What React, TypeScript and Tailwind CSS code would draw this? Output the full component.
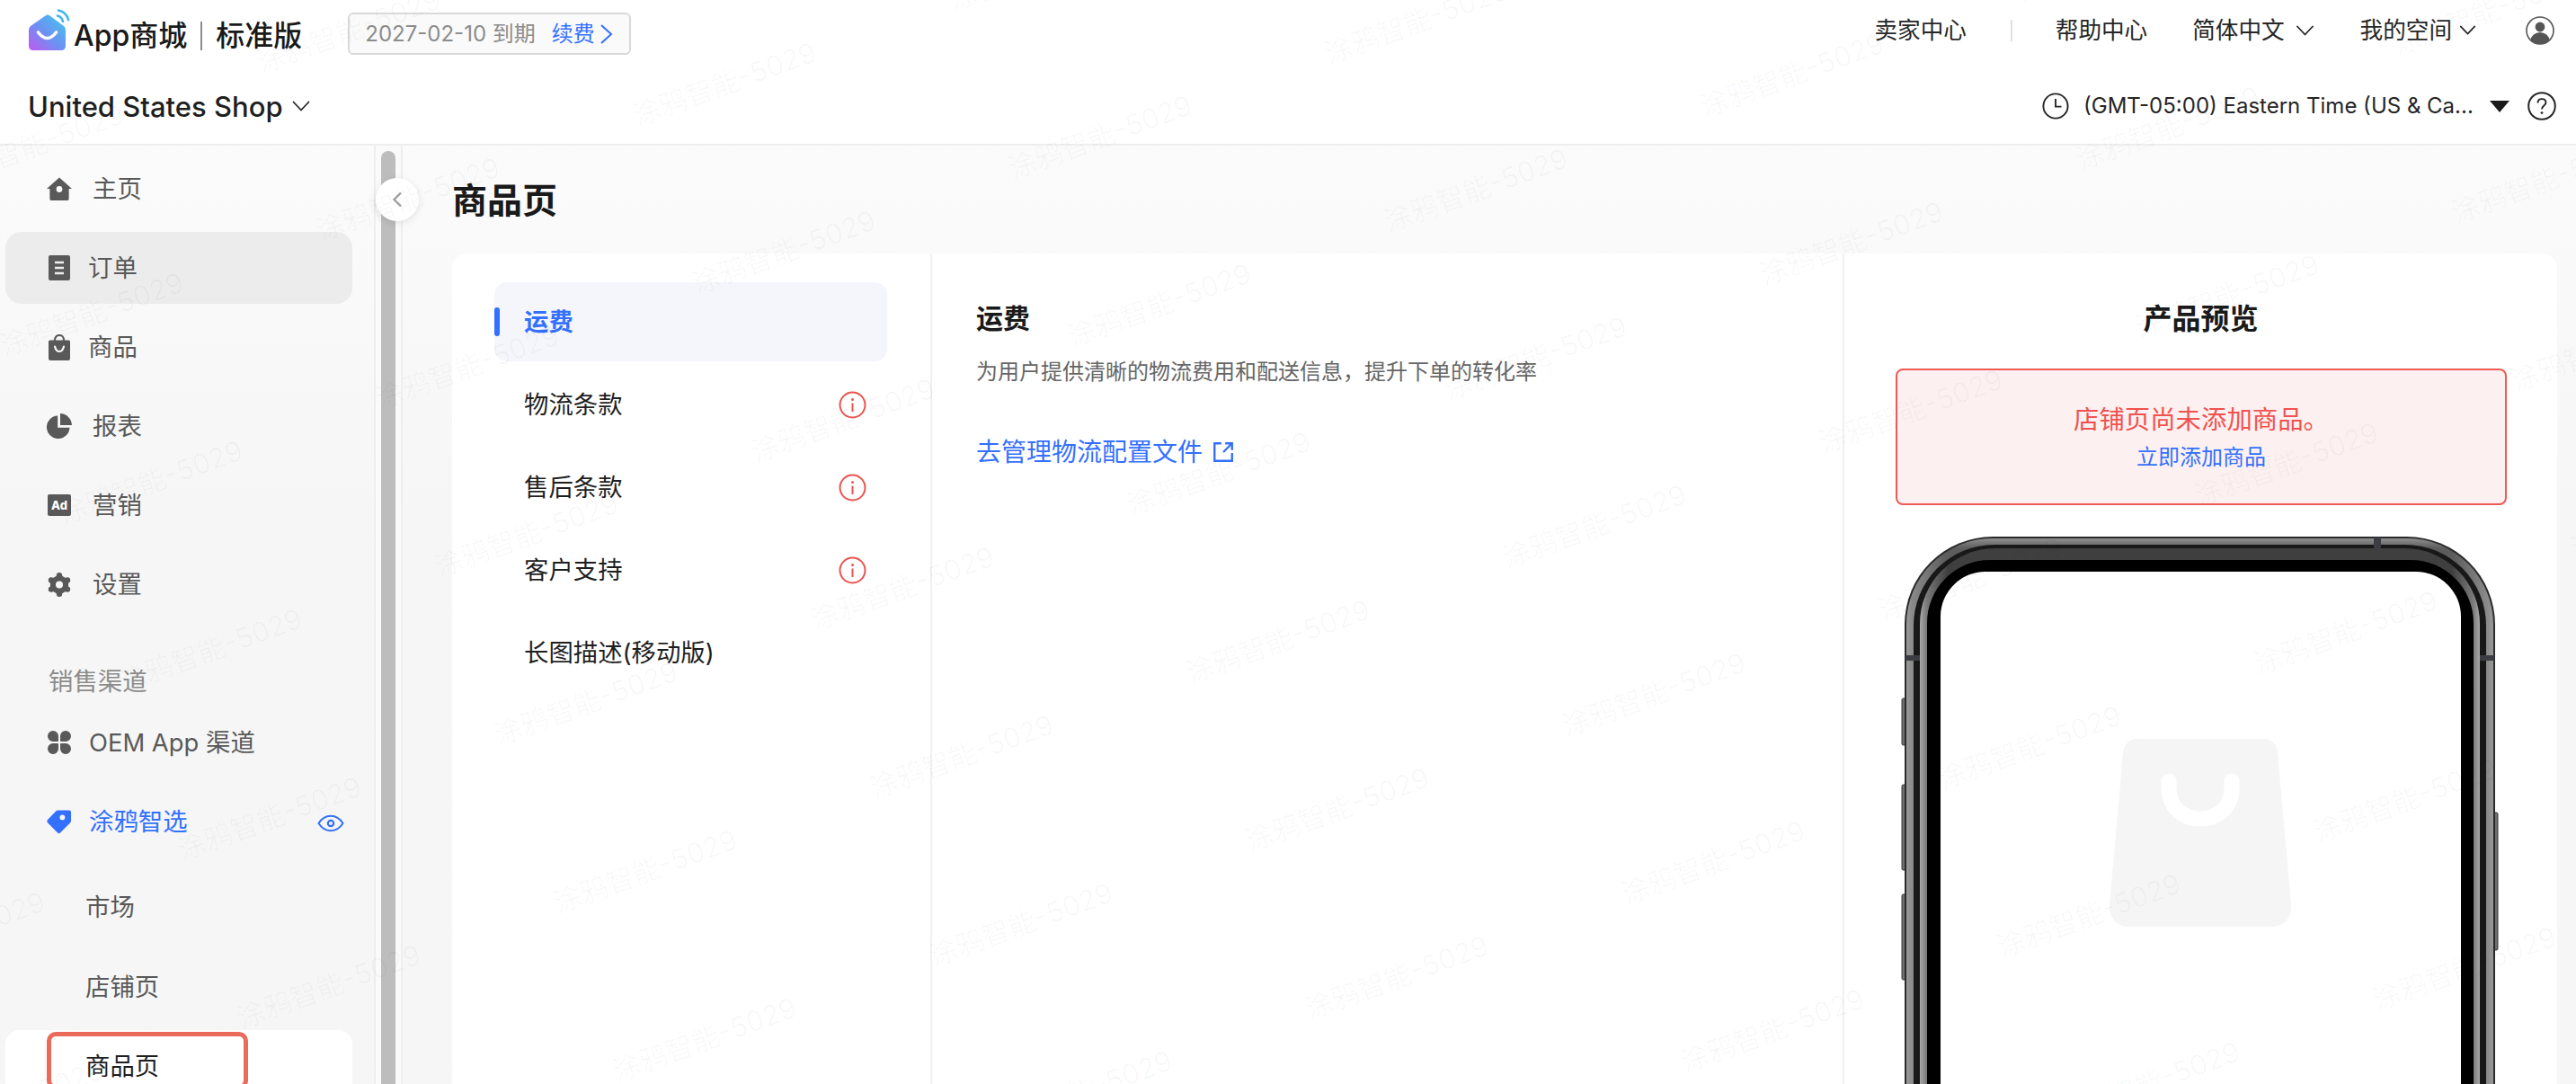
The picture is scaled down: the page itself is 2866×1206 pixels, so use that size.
import type { ReactNode } from "react";

// Rotated watermark lattice measured from the screenshot
const WATERMARKS: { x: number; y: number }[] = [];
for (let m = -5; m <= 8; m++) {
  for (let n = -2; n <= 10; n++) {
    const x = 67 + m * 66 + n * 352;
    const y = 573 + m * 187 - n * 128;
    if (x > -260 && x < 2900 && y > -40 && y < 1300) WATERMARKS.push({ x, y });
  }
}

function Chevron({ className }: { className: string }) {
  return (
    <svg viewBox="0 0 20 12" fill="none" className={className}>
      <path d="M1.5 1.5 10 10.5l8.5-9" stroke="currentColor" strokeWidth="1.8" strokeLinecap="round" strokeLinejoin="round" />
    </svg>
  );
}

function Logo() {
  return (
    <svg width="46" height="47" viewBox="0 0 46 47" fill="none" className="shrink-0">
      <defs>
        <linearGradient id="logoFill" x1="38" y1="8" x2="3" y2="46" gradientUnits="userSpaceOnUse">
          <stop offset="0" stopColor="#44c3ef" />
          <stop offset="0.55" stopColor="#6f8ff2" />
          <stop offset="1" stopColor="#bb5cf0" />
        </linearGradient>
      </defs>
      <path d="M18.5 7.5Q21 5.5 23.5 7.5L39 19Q41 20.5 41 23.5V41Q41 46 36 46H5Q0 46 0 41V23.5Q0 20.5 2 19Z" fill="url(#logoFill)" />
      <path d="M10.5 26Q20.5 39 30.5 26" stroke="#fff" strokeWidth="3.6" strokeLinecap="round" />
      <path d="M32 7.5Q37 9 38 14" stroke="#43b5ee" strokeWidth="2.6" strokeLinecap="round" />
      <path d="M33 1.5Q42 3.5 44 12" stroke="#43b5ee" strokeWidth="2.6" strokeLinecap="round" />
    </svg>
  );
}

function Avatar() {
  return (
    <svg width="32" height="32" viewBox="0 0 32 32" fill="none">
      <defs>
        <clipPath id="avatarClip">
          <circle cx="16" cy="16" r="15" />
        </clipPath>
      </defs>
      <circle cx="16" cy="16" r="15" stroke="#555" strokeWidth="1.6" />
      <g clipPath="url(#avatarClip)" fill="#555">
        <circle cx="16" cy="12" r="5.4" />
        <ellipse cx="16" cy="27" rx="10.5" ry="9" />
      </g>
    </svg>
  );
}

function ClockIcon() {
  return (
    <svg width="30" height="30" viewBox="0 0 30 30" fill="none">
      <circle cx="15" cy="15" r="13.6" stroke="#262626" strokeWidth="1.9" />
      <path d="M15 7v8.6h6.5" stroke="#262626" strokeWidth="1.9" />
    </svg>
  );
}

function HelpIcon() {
  return (
    <svg width="32" height="32" viewBox="0 0 32 32" fill="none">
      <circle cx="16" cy="16" r="14.8" stroke="#262626" strokeWidth="2" />
      <path d="M11.5 12.5c0-2.8 2-4.4 4.6-4.4s4.4 1.6 4.4 3.9c0 3.6-4.5 3.6-4.5 7.6" stroke="#262626" strokeWidth="1.9" />
      <circle cx="16" cy="23.6" r="1.4" fill="#262626" />
    </svg>
  );
}

function InfoIcon() {
  return (
    <svg width="31" height="31" viewBox="0 0 31 31" fill="none">
      <circle cx="15.5" cy="15.5" r="14" stroke="#ea5450" strokeWidth="2" />
      <circle cx="15.5" cy="9.5" r="1.5" fill="#ea5450" />
      <path d="M15.5 13.5v9.5" stroke="#ea5450" strokeWidth="2" />
    </svg>
  );
}

const HomeIcon = (
  <svg width="29" height="27" viewBox="0 0 29 27">
    <path fillRule="evenodd" d="M14.5 0 29 13h-3.5v12a1.5 1.5 0 0 1-1.5 1.5H5A1.5 1.5 0 0 1 3.5 25V13H0ZM14.5 10a3.5 3.5 0 1 0 0 7 3.5 3.5 0 0 0 0-7Z" fill="#595959" />
  </svg>
);

const OrderIcon = (
  <svg width="24" height="28" viewBox="0 0 24 28">
    <rect width="24" height="28" rx="2" fill="#595959" />
    <path d="M7 8h10M7 14h10M7 20h10" stroke="#f0f0f0" strokeWidth="2.6" />
  </svg>
);

const BagIcon = (
  <svg width="24" height="29" viewBox="0 0 24 29" fill="none">
    <path d="M7 8V6a5 5 0 0 1 10 0v2" stroke="#595959" strokeWidth="2.2" />
    <path d="M1.5 6.5h21A1.5 1.5 0 0 1 24 8v19a2 2 0 0 1-2 2H2a2 2 0 0 1-2-2V8a1.5 1.5 0 0 1 1.5-1.5Z" fill="#595959" />
    <path d="M7 13.5c1 4 3 5.5 5 5.5s4-1.5 5-5.5" stroke="#f6f6f6" strokeWidth="2.2" strokeLinecap="round" />
  </svg>
);

const PieIcon = (
  <svg width="28" height="28" viewBox="0 0 28 28">
    <path d="M12.2 2.5V15.8H25.5A12.8 12.8 0 1 1 12.2 2.5Z" fill="#595959" />
    <path d="M15 0.1A13.3 13.3 0 0 1 28 13H15Z" fill="#595959" />
  </svg>
);

const GearIcon = (
  <svg width="26" height="27" viewBox="0 0 26 27" fill="#595959">
    <path d="M13 3 22.1 8.25V18.75L13 24 3.9 18.75V8.25Z" stroke="#595959" strokeWidth="2" strokeLinejoin="round" />
    <circle cx="13" cy="3.3" r="3.2" />
    <circle cx="22" cy="8.4" r="3.2" />
    <circle cx="22" cy="18.6" r="3.2" />
    <circle cx="13" cy="23.7" r="3.2" />
    <circle cx="4" cy="18.6" r="3.2" />
    <circle cx="4" cy="8.4" r="3.2" />
    <circle cx="13" cy="13.5" r="4" fill="#f7f7f7" />
  </svg>
);

const AdIcon = (
  <div className="w-[26px] h-[24px] rounded-[2px] bg-[#595959] flex items-center justify-center text-white text-[13px] leading-none font-extrabold">
    Ad
  </div>
);

const ChannelIcon = (
  <svg width="26" height="26" viewBox="0 0 26 26" fill="#595959">
    <path d="M6 0a6 6 0 0 1 6 6v5a1 1 0 0 1-1 1H6A6 6 0 0 1 6 0ZM20 0a6 6 0 0 1 0 12h-5a1 1 0 0 1-1-1V6a6 6 0 0 1 6-6ZM6 14h5a1 1 0 0 1 1 1v5a6 6 0 1 1-6-6ZM15 14h5a6 6 0 1 1-6 6v-5a1 1 0 0 1 1-1Z" />
  </svg>
);

const TagIcon = (
  <svg width="29" height="29" viewBox="0 0 29 29">
    <path fillRule="evenodd" d="M1 12 10.5 2.2Q11.5 1 13 1H26Q28 1 28 3V13Q28 14.5 27 15.5L15.5 27Q14 28.4 12.5 27L1 15.2Q-.4 13.5 1 12ZM18 6.2a3 3 0 1 0 0 6 3 3 0 0 0 0-6Z" fill="#3370ff" />
  </svg>
);

function EyeIcon() {
  return (
    <svg width="30" height="20" viewBox="0 0 30 20" fill="none" className="ml-auto mr-[9px] mt-[4px]">
      <path d="M1.5 10C5 4.5 9.5 1.8 15 1.8S25 4.5 28.5 10C25 15.5 20.5 18.2 15 18.2S5 15.5 1.5 10Z" stroke="#3370ff" strokeWidth="2" />
      <circle cx="15" cy="10" r="3.2" stroke="#3370ff" strokeWidth="2.2" />
    </svg>
  );
}

function NavItem({
  icon,
  label,
  textClass = "ml-[23px]",
  active = false,
  color = "text-[#595959]",
  children,
}: {
  icon: ReactNode;
  label: string;
  textClass?: string;
  active?: boolean;
  color?: string;
  children?: ReactNode;
}) {
  return (
    <div className={`h-[80px] ml-[6px] mr-[24px] pl-[46px] flex items-center rounded-[18px] ${active ? "bg-[#ececec]" : ""}`}>
      <div className="w-[28px] flex items-center justify-center shrink-0">{icon}</div>
      <span className={`${textClass} ${color} pt-[2px] text-[27.4px]`}>{label}</span>
      {children}
    </div>
  );
}

function Sidebar() {
  return (
    <aside className="w-[416px] shrink-0 pt-[8px] flex flex-col">
      <div className="flex flex-col gap-[8px]">
        <NavItem icon={HomeIcon} label="主页" />
        <NavItem icon={OrderIcon} label="订单" textClass="ml-[18px]" active />
        <NavItem icon={BagIcon} label="商品" textClass="ml-[18px]" />
        <NavItem icon={PieIcon} label="报表" />
        <NavItem icon={AdIcon} label="营销" />
        <NavItem icon={GearIcon} label="设置" />
      </div>
      <div className="mt-[48px] h-[40px] pl-[54px] pt-[2px] flex items-center text-[27.4px] text-[#8c8c8c]">销售渠道</div>
      <div className="mt-[8px] flex flex-col gap-[8px]">
        <NavItem icon={ChannelIcon} label="OEM App 渠道" textClass="ml-[19px]" />
        <NavItem icon={TagIcon} label="涂鸦智选" textClass="ml-[19px]" color="text-[#3370ff]">
          <EyeIcon />
        </NavItem>
      </div>
      <div className="mt-[16px] flex flex-col gap-[8px]">
        <div className="h-[80px] pl-[95px] flex items-center text-[27.4px] text-[#595959]">市场</div>
        <div className="h-[80px] pl-[95px] pt-[2px] flex items-center text-[27.4px] text-[#595959]">店铺页</div>
        <div className="relative h-[80px] ml-[6px] mr-[24px] pl-[89px] pt-[2px] flex items-center rounded-[16px] bg-white text-[27.4px] text-[#1f1f1f]">
          商品页
          <div className="absolute left-[46px] top-[2px] w-[224px] h-[64px] rounded-[10px] border-[5px] border-[#ec6a5a]" />
        </div>
      </div>
    </aside>
  );
}

function PhoneFrame() {
  return (
    <svg width="672" height="616" viewBox="0 0 672 616" fill="none" className="block shrink-0">
      <defs>
        <linearGradient id="rim" x1="7" y1="0" x2="662" y2="0" gradientUnits="userSpaceOnUse">
          <stop offset="0" stopColor="#9a9a9a" />
          <stop offset="0.012" stopColor="#8a8a8a" />
          <stop offset="0.07" stopColor="#5c5c5c" />
          <stop offset="0.93" stopColor="#5c5c5c" />
          <stop offset="0.988" stopColor="#8a8a8a" />
          <stop offset="1" stopColor="#9a9a9a" />
        </linearGradient>
        <linearGradient id="rimTop" x1="0" y1="8" x2="0" y2="20" gradientUnits="userSpaceOnUse">
          <stop offset="0" stopColor="#9a9a9a" stopOpacity="0.9" />
          <stop offset="1" stopColor="#9a9a9a" stopOpacity="0" />
        </linearGradient>
        <linearGradient id="band" x1="23" y1="0" x2="646" y2="0" gradientUnits="userSpaceOnUse">
          <stop offset="0" stopColor="#a8a8a8" />
          <stop offset="0.012" stopColor="#7a7a7a" />
          <stop offset="0.05" stopColor="#3f3f3f" />
          <stop offset="0.95" stopColor="#3f3f3f" />
          <stop offset="0.988" stopColor="#7a7a7a" />
          <stop offset="1" stopColor="#a8a8a8" />
        </linearGradient>
      </defs>
      {/* side buttons */}
      <rect x="3" y="187" width="5" height="52" rx="1.5" fill="#6f6f6f" stroke="#3a3a3a" />
      <rect x="3" y="283" width="5" height="95" rx="1.5" fill="#6f6f6f" stroke="#3a3a3a" />
      <rect x="3" y="405" width="5" height="95" rx="1.5" fill="#6f6f6f" stroke="#3a3a3a" />
      <rect x="661" y="314" width="5" height="153" rx="1.5" fill="#6f6f6f" stroke="#3a3a3a" />
      {/* body, outside in */}
      <rect x="6" y="7" width="657" height="900" rx="98" fill="#2a2a2a" />
      <rect x="8" y="9" width="653" height="896" rx="96" fill="url(#rim)" />
      <rect x="8" y="9" width="653" height="896" rx="96" fill="url(#rimTop)" />
      <rect x="16" y="16" width="637" height="882" rx="90" fill="#181818" />
      <rect x="23" y="20" width="623" height="874" rx="84" fill="url(#band)" />
      <rect x="31" y="33" width="608" height="850" rx="70" fill="#000" />
      <rect x="46" y="46" width="579" height="830" rx="50" fill="#fff" />
      {/* antenna bands */}
      <rect x="7" y="139" width="16" height="6" fill="#3b3d42" />
      <rect x="646" y="139" width="16" height="6" fill="#3b3d42" />
      <rect x="528" y="8" width="8" height="12" fill="#3b3d42" />
      {/* empty bag */}
      <path d="M266 232H405c9 0 15 6 16 15l15 170c1 13-8 24-20 24H254c-12 0-21-11-20-24l15-170c1-9 7-15 17-15Z" fill="#f5f5f5" />
      <path d="M300 279v8c0 20 15 34 35 34s35-14 35-34v-8" stroke="#fff" strokeWidth="17" strokeLinecap="round" />
    </svg>
  );
}

function SettingsNav() {
  const rows = [
    { label: "物流条款", warn: true },
    { label: "售后条款", warn: true },
    { label: "客户支持", warn: true },
    { label: "长图描述(移动版)", warn: false },
  ];
  return (
    <div className="w-[534px] shrink-0 pt-[32px] pl-[47px] pr-[48px] border-r-2 border-[#f0f0f0] flex flex-col gap-[4px]">
      <div className="relative h-[88px] pl-[33px] pt-[1px] flex items-center rounded-[14px] bg-[#f5f6fb] text-[27.4px] font-semibold text-[#3370ff]">
        <div className="absolute left-0 top-[28px] w-[6px] h-[32px] rounded-full bg-[#3370ff]" />
        运费
      </div>
      {rows.map((row) => (
        <div key={row.label} className="h-[88px] pl-[33px] pr-[23px] flex items-center justify-between text-[27.4px] text-[#1f1f1f]">
          <span className="pt-[2px]">{row.label}</span>
          {row.warn && <InfoIcon />}
        </div>
      ))}
    </div>
  );
}

export default function App() {
  return (
    <div className="relative w-[2866px] h-[1206px] overflow-hidden bg-white flex flex-col font-['Inter','Noto_Sans_CJK_SC',sans-serif]">
      <header className="h-[162px] shrink-0 bg-white border-b-2 border-[#eeeeee] flex flex-col">
        <div className="h-[68px] pl-[32px] pr-[24px] flex items-center">
          <div className="mt-[-2px]"><Logo /></div>
          <div className="ml-[4px] mt-[12px] flex items-center text-[32px] font-medium text-[#1a1a1a] leading-none">
            <span>App商城</span>
            <span className="ml-[15px] w-[2px] h-[32px] bg-[#8c8c8c]" />
            <span className="ml-[15px]">标准版</span>
          </div>
          <div className="ml-[51px] mt-[7px] h-[47px] pl-[17px] pr-[18px] flex items-center rounded-[6px] border-2 border-[#d9d9d9] bg-[#fafafa] text-[24px] text-[#8c8c8c]">
            2027-02-10 到期
            <span className="ml-[18px] text-[#3370ff]">续费</span>
            <svg width="15" height="24" viewBox="0 0 15 24" fill="none" className="ml-[5px]">
              <path d="M2 2l11 10L2 22" stroke="#3370ff" strokeWidth="2" />
            </svg>
          </div>
          <div className="ml-auto flex items-center text-[25.6px] text-[#262626]">
            <span className="pt-[1px]">卖家中心</span>
            <span className="ml-[49px] w-[2px] h-[24px] bg-[#e0e0e0]" />
            <span className="ml-[48px] pt-[1px]">帮助中心</span>
            <span className="ml-[50px] pt-[1px]">简体中文</span>
            <Chevron className="ml-[12px] w-[21px] h-[12px] text-[#262626]" />
            <span className="ml-[51px] pt-[1px]">我的空间</span>
            <Chevron className="ml-[8px] w-[19px] h-[11px] text-[#262626]" />
            <div className="ml-[55px]"><Avatar /></div>
          </div>
        </div>
        <div className="h-[92px] pt-[8px] pl-[31px] pr-[22px] flex items-center">
          <span className="text-[31px] font-medium text-[#1f1f1f] leading-none">United States Shop</span>
          <Chevron className="ml-[10px] w-[20px] h-[12px] text-[#262626]" />
          <div className="ml-auto flex items-center text-[24px] text-[#262626]">
            <ClockIcon />
            <span className="ml-[16px] w-[432px] whitespace-nowrap">(GMT-05:00) Eastern Time (US &amp; Ca...</span>
            <svg width="22" height="13" viewBox="0 0 22 13" className="ml-[20px]">
              <path d="M0 0h22L11 13Z" fill="#1a1a1a" />
            </svg>
            <div className="ml-[20px]"><HelpIcon /></div>
          </div>
        </div>
      </header>

      <div className="flex-1 min-h-0 flex bg-linear-to-b from-[#fbfbfb] to-[#f6f6f6] to-40%">
        <Sidebar />
        <div className="w-[32px] shrink-0 bg-[#fafafa] border-x-2 border-x-[#eeeeee] pt-[6px] pl-[6px]">
          <div className="w-[16px] h-full rounded-t-[8px] bg-[#bdbdbd]" />
        </div>

        <main className="flex-1 min-w-0 pl-[55px] pr-[21px] flex flex-col">
          <div className="h-[120px] shrink-0 pt-[2px] flex items-center text-[39px] font-bold text-[#1a1a1a]">商品页</div>
          <div className="flex-1 flex rounded-t-[16px] bg-white">
            <SettingsNav />
            <section className="w-[1015px] shrink-0 pt-[52px] pl-[49px] border-r-2 border-[#f0f0f0]">
              <h2 className="h-[40px] flex items-center text-[30px] font-bold text-[#1a1a1a]">运费</h2>
              <p className="mt-[24px] h-[32px] flex items-center text-[24px] text-[#666666]">为用户提供清晰的物流费用和配送信息，提升下单的转化率</p>
              <div className="mt-[57px] h-[32px] flex items-center text-[28px] text-[#3370ff]">
                去管理物流配置文件
                <svg width="26" height="26" viewBox="0 0 24 24" fill="none" className="ml-[10px]">
                  <path d="M10 3H3v18h18v-8" stroke="#3370ff" strokeWidth="2.2" />
                  <path d="M14 3h7v7M21 3l-9 9" stroke="#3370ff" strokeWidth="2.2" />
                </svg>
              </div>
            </section>
            <section className="flex-1 min-w-0 pt-[53px] flex flex-col">
              <h2 className="h-[40px] flex items-center justify-center text-[32px] font-bold text-[#1a1a1a]">产品预览</h2>
              <div className="mt-[35px] ml-[57px] mr-[56px] h-[152px] shrink-0 flex flex-col items-center justify-center gap-[6px] rounded-[8px] border-2 border-[#f05a55] bg-[#fdf0f0]">
                <span className="h-[40px] flex items-center text-[28.4px] text-[#f0524f]">店铺页尚未添加商品。</span>
                <span className="h-[32px] flex items-center text-[24px] text-[#3370ff]">立即添加商品</span>
              </div>
              <div className="mt-[28px] ml-[61px]"><PhoneFrame /></div>
            </section>
          </div>
        </main>
      </div>

      {/* collapse toggle sits over the scrollbar */}
      <div className="absolute left-[418px] top-[198px] w-[48px] h-[48px] rounded-full bg-white shadow-[0_2px_8px_rgba(0,0,0,0.10)] flex items-center justify-center">
        <svg width="12" height="18" viewBox="0 0 12 18" fill="none">
          <path d="M10 1.5 2.5 9l7.5 7.5" stroke="#a0a0a0" strokeWidth="2.4" />
        </svg>
      </div>

      {/* watermark overlay */}
      <div className="absolute inset-0 overflow-hidden pointer-events-none">
        {WATERMARKS.map((w) => (
          <span
            key={`${w.x}-${w.y}`}
            className="absolute origin-left -rotate-[20deg] whitespace-nowrap text-[31px] leading-[40px] text-[#000000]/[0.028]"
            style={{ left: w.x, top: w.y - 20 }}
          >
            涂鸦智能-5029
          </span>
        ))}
      </div>
    </div>
  );
}
